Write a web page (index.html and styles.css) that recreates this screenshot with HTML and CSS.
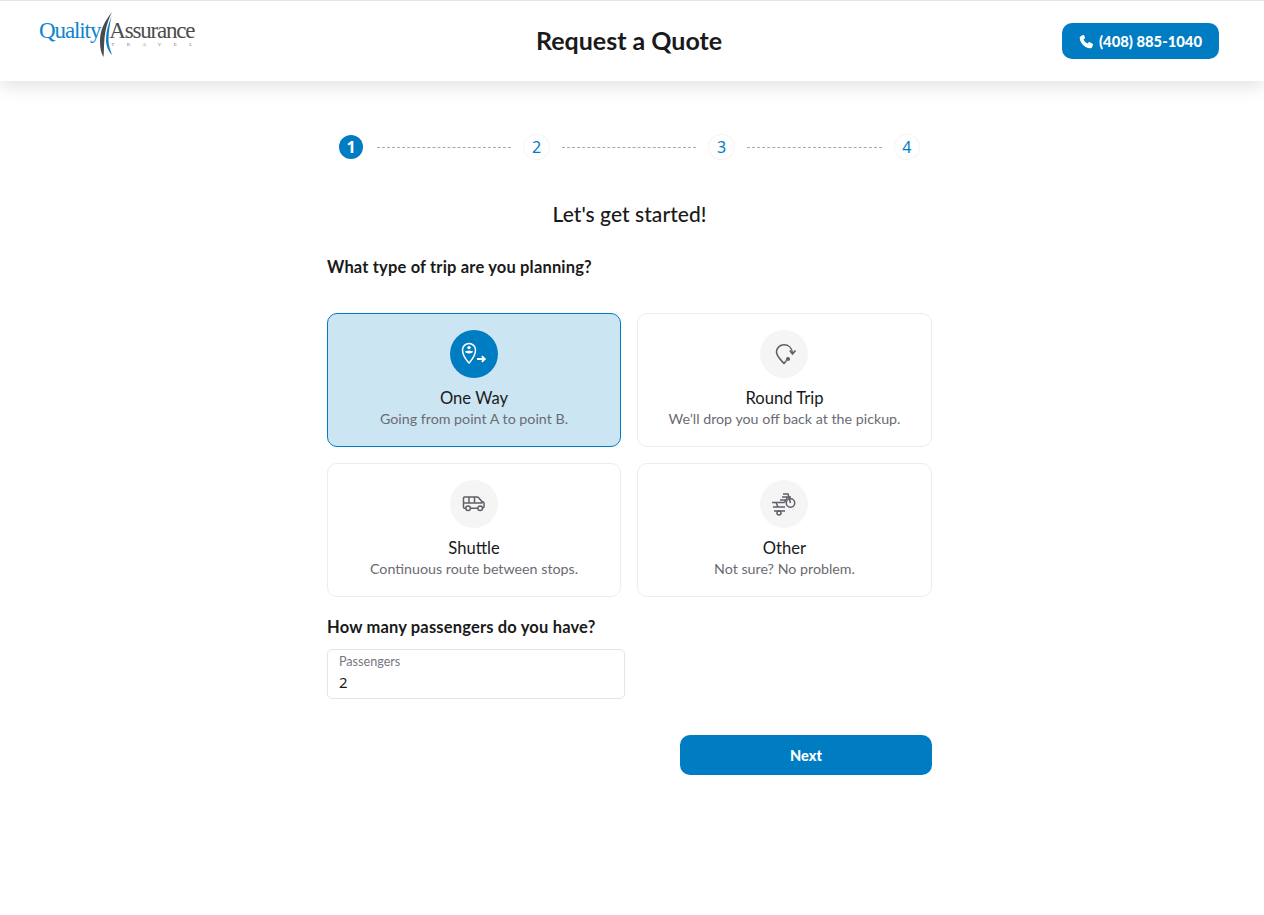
FILE: index.html
```html
<!DOCTYPE html>
<html lang="en">
<head>
<meta charset="utf-8">
<title>Request a Quote</title>
<link rel="stylesheet" href="styles.css">
</head>
<body>
<header class="topbar">
  <a class="logo" href="#">
    <span class="logo-quality">Quality</span>
    <svg class="logo-swoosh" width="16" height="46" viewBox="0 0 16 46"><path d="M13 0C6 9 1 17 1 29c0 7 1 12 3.500 16 .6-5 .3-10 .8-16C6 18 9 8 13 0Z" fill="#4a4a4c"/><path d="M12.500 4C9 13 7 20 7 28c0 5 2 11 6 15-2-6-3.500-10-3.500-15C9.500 20 11 11 12.500 4Z" fill="#0f7dc2"/></svg>
    <span class="logo-right"><span class="logo-assurance">Assurance</span><span class="logo-travel">TRAVEL</span></span>
  </a>
  <h1 class="page-title">Request a Quote</h1>
  <a class="phone" href="#">
    <svg width="15" height="15" viewBox="0 0 24 24"><path fill="#fff" d="M6.600 1.600 3 3.100C1.600 3.800 1 5 1.200 6.600c1 8.200 8 15.200 16.200 16.200 1.600.2 2.800-.4 3.500-1.800l1.500-3.600c.3-.8 0-1.500-.7-1.900l-4.400-2.400c-.7-.4-1.400-.3-2 .3l-1.600 1.900c-2.900-1.400-5.200-3.700-6.600-6.600l1.900-1.600c.6-.6.7-1.300.3-2L8.500 2.300c-.4-.7-1.100-1-1.900-.7Z"/></svg>
    <span>(408) 885-1040</span>
  </a>
</header>

<main class="wizard">
  <ol class="steps">
    <li class="step step-active">1</li>
    <li class="step-line"></li>
    <li class="step">2</li>
    <li class="step-line"></li>
    <li class="step">3</li>
    <li class="step-line"></li>
    <li class="step">4</li>
  </ol>

  <h2 class="intro">Let's get started!</h2>
  <h3 class="question q-trip">What type of trip are you planning?</h3>

  <div class="options">
    <div class="option option-selected">
      <span class="icon-disc">
        <svg width="26" height="26" viewBox="0 0 26 26" fill="none" stroke="currentColor" stroke-width="1.500"><path d="M8 22C5 18.500 1.500 15 1.500 9a6.500 6.500 0 0 1 13 0C14.500 15 11 18.500 8 22Z" stroke-linejoin="round"/><circle cx="8" cy="6.600" r="1.700" fill="currentColor" stroke="none"/><path d="M4 10.300c1-.9 7-.9 8 0 0 3-8 3-8 0Z" fill="currentColor" stroke="none"/><path d="M16 18h7.500M20.800 15.200 23.800 18l-3 2.800" stroke-width="1.800"/></svg>
      </span>
      <span class="option-title">One Way</span>
      <span class="option-desc">Going from point A to point B.</span>
    </div>
    <div class="option">
      <span class="icon-disc">
        <svg width="26" height="26" viewBox="0 0 26 26" fill="none" stroke="currentColor" stroke-width="1.600"><path d="M21.500 12C21 7 17.500 3.800 13 3.800 9 3.800 5.500 6.800 5.500 11c0 4 3.500 7 7.500 11.500l2.500-3" stroke-linejoin="round"/><path d="M18.800 9.500 21.500 13l3-3.500" stroke-width="1.700"/><circle cx="17" cy="18" r="2.100" fill="currentColor" stroke="none"/></svg>
      </span>
      <span class="option-title">Round Trip</span>
      <span class="option-desc">We’ll drop you off back at the pickup.</span>
    </div>
    <div class="option">
      <span class="icon-disc">
        <svg width="26" height="26" viewBox="0 0 26 26" fill="none" stroke="currentColor" stroke-width="1.500"><path d="M4.800 17.300H3.500a1 1 0 0 1-1-1V7a1 1 0 0 1 1-1H16c.8 0 1.400.3 1.900.9l3 3.600 1.300.5c.5.3.8.8.8 1.400v3.400a1 1 0 0 1-1 1h-.5M9.400 17.300h7.400M2.500 12h19M8 6v6M13.500 6v6"/><circle cx="7.100" cy="17.300" r="2.300"/><circle cx="19.200" cy="17.300" r="2.300"/></svg>
      </span>
      <span class="option-title">Shuttle</span>
      <span class="option-desc">Continuous route between stops.</span>
    </div>
    <div class="option">
      <span class="icon-disc">
        <svg width="26" height="26" viewBox="0 0 26 26" fill="none" stroke="currentColor" stroke-width="1.500"><circle cx="19.500" cy="12" r="4.200"/><path d="M12 3h5l2.500 9M11 6h9M9 9h6M1 11.500h12.500M2 16h12M3 20h11M13.500 11.500 16.500 6M5 11.500 7 16"/><circle cx="8" cy="22" r="2"/></svg>
      </span>
      <span class="option-title">Other</span>
      <span class="option-desc">Not sure? No problem.</span>
    </div>
  </div>

  <h3 class="question q-pass">How many passengers do you have?</h3>
  <div class="field">
    <label class="field-label" for="pax">Passengers</label>
    <input class="field-input" id="pax" type="text" value="2">
  </div>

  <div class="actions"><button class="next" type="button">Next</button></div>
</main>
</body>
</html>
```

FILE: styles.css
```css
* { box-sizing: border-box; }
html, body { margin: 0; padding: 0; }
body {
  background: #fff;
  color: #1a1a1a;
  font-family: Lato, "Noto Sans", sans-serif;
  height: 915px;
  overflow: hidden;
}
a { text-decoration: none; }

.topbar {
  height: 81px;
  border-top: 1px solid #e4e4e4;
  background: #fff;
  box-shadow: 0 4px 18px rgba(0, 0, 0, 0.13);
  display: grid;
  grid-template-columns: 1fr auto 1fr;
  align-items: start;
  padding: 0 45px 0 39px;
}
.logo {
  display: flex;
  align-items: flex-start;
  padding-top: 11px;
  font-family: "Liberation Serif", serif;
}
.logo-quality {
  color: #0f86cc;
  font-size: 23px;
  letter-spacing: -1.100px;
  line-height: 38px;
}
.logo-swoosh { margin-left: -1px; flex: none; }
.logo-right {
  display: flex;
  flex-direction: column;
  margin-left: -6px;
}
.logo-assurance {
  color: #4d4d4f;
  font-size: 23px;
  letter-spacing: -1.200px;
  line-height: 26px;
  margin-top: 6px;
}
.logo-travel {
  color: #777;
  font-size: 5px;
  letter-spacing: 12.400px;
  line-height: 5px;
  margin-left: 2px;
  margin-top: -2px;
  white-space: nowrap;
}
.page-title {
  margin: 21px 0 0;
  font-size: 25px;
  line-height: 36px;
  font-weight: 700;
  color: #1a1a1a;
}
.phone {
  justify-self: end;
  margin-top: 22px;
  width: 157px;
  height: 36px;
  border-radius: 10px;
  background: #007cc3;
  color: #fff;
  display: flex;
  align-items: center;
  justify-content: center;
  gap: 5px;
  font-size: 14.800px;
  font-weight: 900;
}

.wizard {
  width: 605px;
  margin-left: 327px;
  padding-top: 53px;
}
.steps {
  list-style: none;
  margin: 0;
  padding: 0 12px;
  display: flex;
  align-items: center;
  height: 26px;
}
.step {
  flex: none;
  width: 26.400px;
  height: 26px;
  border-radius: 50%;
  border: 1px solid #f4f4f4;
  color: #007cc3;
  font-family: "Noto Sans", sans-serif;
  font-size: 16px;
  line-height: 24px;
  padding-bottom: 1px;
  display: flex;
  align-items: center;
  justify-content: center;
}
.step-active {
  width: 24px;
  height: 24px;
  margin-right: 1.600px;
  border: 0;
  background: #007cc3;
  color: #fff;
  font-weight: 700;
}
.step-line {
  flex: 1;
  margin: 0 12px;
  border-top: 1px dashed #a9a9a9;
}
.intro {
  margin: 0;
  padding-top: 39px;
  text-align: center;
  font-size: 21px;
  line-height: 30px;
  font-weight: 500;
  letter-spacing: 0.050px;
  color: #1a1a1a;
}
.question {
  margin: 0;
  font-size: 16.500px;
  line-height: 24px;
  font-weight: 700;
  letter-spacing: 0.170px;
  color: #1a1a1a;
}
.q-trip { padding-top: 26px; }
.q-pass { margin-top: 18px; }

.options {
  margin-top: 34px;
  display: grid;
  grid-template-columns: 294px 295px;
  grid-auto-rows: 134px;
  gap: 16px;
}
.option {
  border: 1px solid #ececec;
  border-radius: 10px;
  background: #fff;
  display: flex;
  flex-direction: column;
  align-items: center;
  padding-top: 16px;
}
.option-selected {
  background: #cce5f3;
  border-color: #007cc3;
}
.icon-disc {
  width: 48px;
  height: 48px;
  border-radius: 50%;
  background: #f5f5f6;
  color: #5f5f67;
  display: flex;
  align-items: center;
  justify-content: center;
}
.option:nth-child(even) .icon-disc { margin-right: 1px; }
.option-selected .icon-disc {
  background: #007cc3;
  color: #fff;
}
.option-title {
  margin-top: 8px;
  font-size: 16.600px;
  line-height: 24px;
  color: #1a1a1a;
}
.option-desc {
  margin-top: -1px;
  font-size: 14.250px;
  line-height: 20px;
  color: #6b6b73;
}

.field {
  margin-top: 10px;
  width: 298px;
  height: 50px;
  border: 1px solid #e5e5e5;
  border-radius: 5px;
  padding: 4px 11px 0;
  display: flex;
  flex-direction: column;
}
.field-label {
  font-size: 12.600px;
  line-height: 15px;
  color: #77777f;
}
.field-input {
  border: 0;
  outline: 0;
  padding: 0;
  margin-top: 2px;
  font-family: "Noto Sans", sans-serif;
  font-size: 15px;
  line-height: 22px;
  color: #1a1a1a;
  background: transparent;
  width: 100%;
}
.actions {
  margin-top: 36px;
  display: flex;
  justify-content: flex-end;
}
.next {
  width: 252px;
  height: 40px;
  border: 0;
  border-radius: 10px;
  background: #007cc3;
  color: #fff;
  font-family: inherit;
  font-size: 14.500px;
  font-weight: 900;
}
```
